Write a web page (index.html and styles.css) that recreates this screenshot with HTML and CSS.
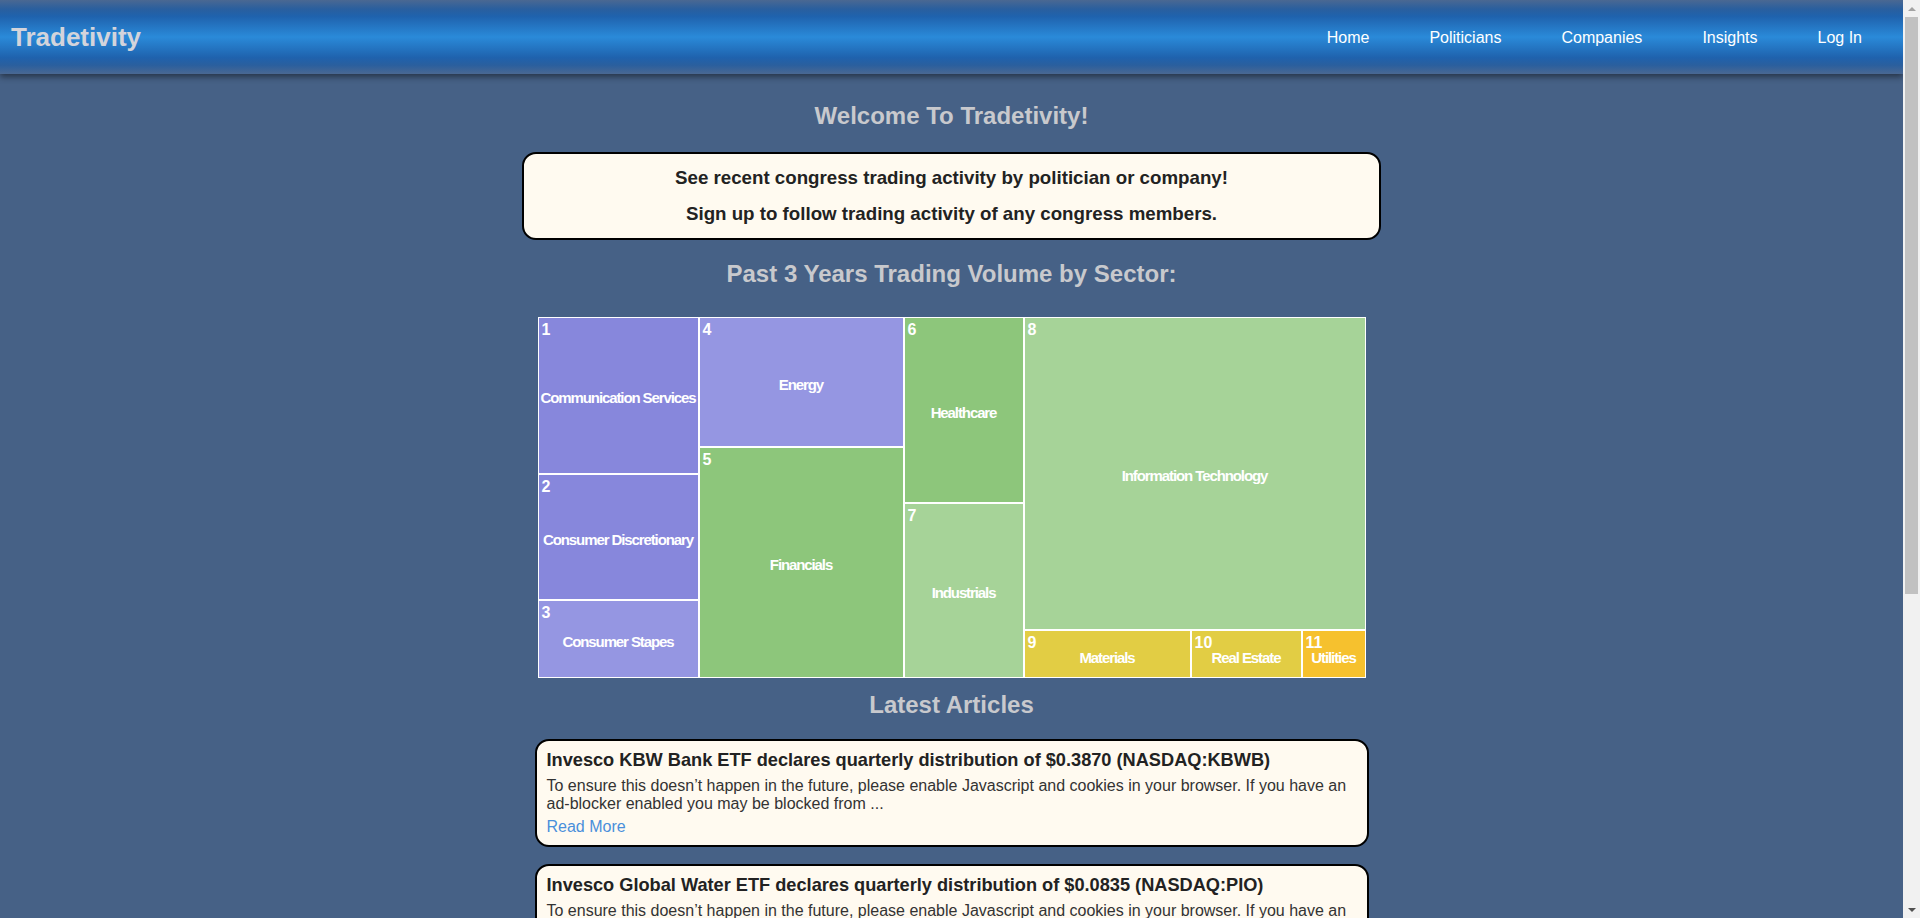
FILE: index.html
```html
<!DOCTYPE html>
<html lang="en">
<head>
<meta charset="utf-8">
<title>Tradetivity</title>
<link rel="stylesheet" href="styles.css">
</head>
<body>
<header class="topbar">
  <a class="logo" href="#">Tradetivity</a>
  <nav class="nav">
    <a href="#">Home</a>
    <a href="#">Politicians</a>
    <a href="#">Companies</a>
    <a href="#">Insights</a>
    <a href="#">Log In</a>
  </nav>
</header>
<main class="main">
  <h2 class="section-title welcome-title">Welcome To Tradetivity!</h2>
  <div class="intro">
    <h3>See recent congress trading activity by politician or company!</h3>
    <h3>Sign up to follow trading activity of any congress members.</h3>
  </div>
  <h2 class="section-title sector-title">Past 3 Years Trading Volume by Sector:</h2>
  <div class="treemap">
    <div class="tm-col" style="flex-basis:161px">
      <div class="tm-cell c-purple" style="flex-basis:157px"><span class="tm-num">1</span><span class="tm-label">Communication Services</span></div>
      <div class="tm-cell c-purple" style="flex-basis:126px"><span class="tm-num">2</span><span class="tm-label">Consumer Discretionary</span></div>
      <div class="tm-cell c-lilac" style="flex-basis:78px"><span class="tm-num">3</span><span class="tm-label">Consumer Stapes</span></div>
    </div>
    <div class="tm-col" style="flex-basis:205px">
      <div class="tm-cell c-lilac" style="flex-basis:130px"><span class="tm-num">4</span><span class="tm-label">Energy</span></div>
      <div class="tm-cell c-green" style="flex-basis:231px"><span class="tm-num">5</span><span class="tm-label">Financials</span></div>
    </div>
    <div class="tm-col" style="flex-basis:120px">
      <div class="tm-cell c-green" style="flex-basis:186px"><span class="tm-num">6</span><span class="tm-label">Healthcare</span></div>
      <div class="tm-cell c-lightgreen" style="flex-basis:175px"><span class="tm-num">7</span><span class="tm-label">Industrials</span></div>
    </div>
    <div class="tm-col" style="flex-basis:342px">
      <div class="tm-cell c-lightgreen" style="flex-basis:313px"><span class="tm-num">8</span><span class="tm-label">Information Technology</span></div>
      <div class="tm-row" style="flex-basis:48px">
        <div class="tm-cell c-yellow tm-small" style="flex-basis:167px"><span class="tm-num">9</span><span class="tm-label">Materials</span></div>
        <div class="tm-cell c-yellow tm-small" style="flex-basis:111px"><span class="tm-num">10</span><span class="tm-label">Real Estate</span></div>
        <div class="tm-cell c-orange tm-small" style="flex-basis:64px"><span class="tm-num">11</span><span class="tm-label">Utilities</span></div>
      </div>
    </div>
  </div>
  <h2 class="section-title articles-title">Latest Articles</h2>
  <section class="articles">
    <article class="article">
      <h4 class="article-title">Invesco KBW Bank ETF declares quarterly distribution of $0.3870 (NASDAQ:KBWB)</h4>
      <p class="article-text">To ensure this doesn’t happen in the future, please enable Javascript and cookies in your browser. If you have an ad-blocker enabled you may be blocked from ...</p>
      <a class="read-more" href="#">Read More</a>
    </article>
    <article class="article">
      <h4 class="article-title">Invesco Global Water ETF declares quarterly distribution of $0.0835 (NASDAQ:PIO)</h4>
      <p class="article-text">To ensure this doesn’t happen in the future, please enable Javascript and cookies in your browser. If you have an ad-blocker enabled you may be blocked from ...</p>
      <a class="read-more" href="#">Read More</a>
    </article>
    <article class="article">
      <h4 class="article-title">Invesco S&amp;P 500 Equal Weight ETF declares quarterly distribution of $0.5129 (NYSEARCA:RSP)</h4>
      <p class="article-text">To ensure this doesn’t happen in the future, please enable Javascript and cookies in your browser. If you have an ad-blocker enabled you may be blocked from ...</p>
      <a class="read-more" href="#">Read More</a>
    </article>
  </section>
</main>
<div class="scrollbar" aria-hidden="true">
  <div class="sb-btn sb-up"></div>
  <div class="sb-thumb"></div>
  <div class="sb-space"></div>
  <div class="sb-btn sb-down"></div>
</div>
</body>
</html>
```

FILE: styles.css
```css
html {
  background: #466186;
}
body {
  margin: 0 17px 0 0;
  background: #466186;
  font-family: "Liberation Sans", Arial, sans-serif;
}
.scrollbar {
  position: fixed;
  top: 0;
  right: 0;
  width: 17px;
  height: 100vh;
  background: #f1f1f1;
  display: flex;
  flex-direction: column;
  align-items: center;
  z-index: 10;
}
.sb-btn {
  width: 17px;
  height: 17px;
  flex-shrink: 0;
  display: flex;
  align-items: center;
  justify-content: center;
}
.sb-btn::before {
  content: "";
  width: 0;
  height: 0;
  border-left: 4px solid transparent;
  border-right: 4px solid transparent;
}
.sb-up::before {
  border-bottom: 4px solid #a3a3a3;
}
.sb-down::before {
  border-top: 4px solid #505050;
}
.sb-thumb {
  width: 13px;
  height: 577px;
  background: #c1c1c1;
  flex-shrink: 0;
}
.sb-space {
  flex: 1;
}
.topbar {
  height: 74px;
  display: flex;
  align-items: center;
  justify-content: space-between;
  padding: 0 11px 0 11px;
  background: linear-gradient(to bottom, #4a6892 0%, #2a5f9e 12%, #1f62ad 22%, #2a8ad9 50%, #1f62ad 78%, #2a5f9e 88%, #4a6892 100%);
  box-shadow: 0 3px 6px rgba(0, 0, 0, 0.45);
  position: relative;
}
.logo {
  color: #d3d4db;
  font-size: 26px;
  font-weight: bold;
  text-decoration: none;
}
.nav {
  display: flex;
  margin-top: 2px;
}
.nav a {
  color: #ffffff;
  font-size: 16px;
  text-decoration: none;
  padding: 0 30px;
}
.main {
  display: flex;
  flex-direction: column;
  align-items: center;
  padding: 28px 0 40px;
}
.section-title {
  margin: 0;
  color: #c8c9cd;
  font-size: 24px;
  font-weight: bold;
}
.intro {
  margin-top: 22px;
  width: 859px;
  box-sizing: border-box;
  background: #fffaf0;
  border: 2px solid #000;
  border-radius: 14px;
  padding: 13px 0;
  display: flex;
  flex-direction: column;
  gap: 14px;
  text-align: center;
}
.intro h3 {
  margin: 0;
  font-size: 18.72px;
  color: #222;
}
.sector-title {
  margin-top: 20px;
}
.treemap {
  margin-top: 29px;
  width: 828px;
  height: 361px;
  display: flex;
}
.tm-col {
  display: flex;
  flex-direction: column;
  flex-shrink: 0;
  flex-grow: 0;
}
.tm-row {
  display: flex;
  flex-shrink: 0;
}
.tm-cell {
  position: relative;
  box-sizing: border-box;
  border: 1px solid #fff;
  display: flex;
  align-items: center;
  justify-content: center;
  flex-shrink: 0;
  flex-grow: 0;
  padding-top: 4px;
  color: #fff;
  font-weight: bold;
}
.tm-small {
  padding-top: 6px;
}
.tm-num {
  position: absolute;
  top: 4px;
  left: 3px;
  font-size: 16px;
  line-height: 1;
}
.tm-label {
  font-size: 15px;
  letter-spacing: -1.1px;
  white-space: nowrap;
}
.c-purple { background: #8787dc; }
.c-lilac { background: #9596e2; }
.c-green { background: #8dc67b; }
.c-lightgreen { background: #a6d398; }
.c-yellow { background: #e2cd44; }
.c-orange { background: #f6c12e; }
.articles-title {
  margin-top: 13px;
}
.articles {
  margin-top: 20px;
  width: 834px;
  display: flex;
  flex-direction: column;
  gap: 17px;
}
.article {
  box-sizing: border-box;
  background: #fffaf0;
  border: 2px solid #000;
  border-radius: 14px;
  padding: 9px 10px;
}
.article-title {
  margin: 0;
  font-size: 18.2px;
  color: #222;
}
.article-text {
  margin: 6px 0 5px;
  font-size: 16px;
  color: #333;
}
.read-more {
  color: #4a8fdb;
  font-size: 16px;
  text-decoration: none;
}
```
